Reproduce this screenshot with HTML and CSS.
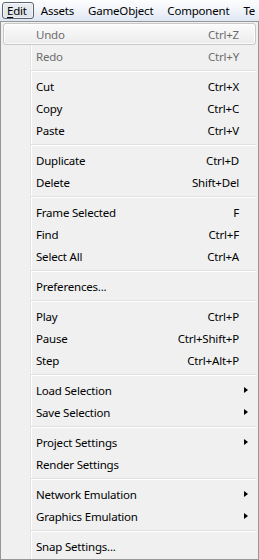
FILE: index.html
```html
<!DOCTYPE html>
<html>
<head>
<meta charset="utf-8">
<link rel="stylesheet" href="styles.css">
</head>
<body>
<div class="menubar">
  <span class="mb-item active"><u>E</u>dit</span>
  <span class="mb-item">Assets</span>
  <span class="mb-item">GameObject</span>
  <span class="mb-item">Component</span>
  <span class="mb-item">Te</span>
</div>
<div class="menu">
  <div class="item disabled hot"><span class="label">Undo</span><span class="key">Ctrl+Z</span></div>
  <div class="item disabled"><span class="label">Redo</span><span class="key">Ctrl+Y</span></div>
  <div class="sep"></div>
  <div class="item"><span class="label">Cut</span><span class="key">Ctrl+X</span></div>
  <div class="item"><span class="label">Copy</span><span class="key">Ctrl+C</span></div>
  <div class="item"><span class="label">Paste</span><span class="key">Ctrl+V</span></div>
  <div class="sep"></div>
  <div class="item"><span class="label">Duplicate</span><span class="key">Ctrl+D</span></div>
  <div class="item"><span class="label">Delete</span><span class="key">Shift+Del</span></div>
  <div class="sep"></div>
  <div class="item"><span class="label">Frame Selected</span><span class="key">F</span></div>
  <div class="item"><span class="label">Find</span><span class="key">Ctrl+F</span></div>
  <div class="item"><span class="label">Select All</span><span class="key">Ctrl+A</span></div>
  <div class="sep"></div>
  <div class="item"><span class="label">Preferences...</span></div>
  <div class="sep"></div>
  <div class="item"><span class="label">Play</span><span class="key">Ctrl+P</span></div>
  <div class="item"><span class="label">Pause</span><span class="key">Ctrl+Shift+P</span></div>
  <div class="item"><span class="label">Step</span><span class="key">Ctrl+Alt+P</span></div>
  <div class="sep"></div>
  <div class="item sub"><span class="label">Load Selection</span><span class="arrow"></span></div>
  <div class="item sub"><span class="label">Save Selection</span><span class="arrow"></span></div>
  <div class="sep"></div>
  <div class="item sub"><span class="label">Project Settings</span><span class="arrow"></span></div>
  <div class="item"><span class="label">Render Settings</span></div>
  <div class="sep"></div>
  <div class="item sub"><span class="label">Network Emulation</span><span class="arrow"></span></div>
  <div class="item sub"><span class="label">Graphics Emulation</span><span class="arrow"></span></div>
  <div class="sep"></div>
  <div class="item"><span class="label">Snap Settings...</span></div>
</div>
</body>
</html>
```
FILE: styles.css
```css
html, body {
  margin: 0;
  padding: 0;
  background: #f0f0f0;
  overflow: hidden;
}
body {
  width: 259px;
  height: 560px;
  font-family: "Noto Sans", "Open Sans", sans-serif;
  font-size: 11.5px;
  letter-spacing: -0.2px;
  color: #000;
}
.menubar {
  height: 21px;
  box-sizing: border-box;
  display: flex;
  align-items: center;
  padding: 0 0 0 2px;
  white-space: nowrap;
  overflow: hidden;
  background: linear-gradient(#fdfdfe 0%, #f3f6fb 40%, #dfe7f3 100%);
}
.mb-item {
  flex: none;
  height: 17px;
  line-height: 16px;
  box-sizing: border-box;
  padding: 0 6px;
  border: 1px solid transparent;
  border-radius: 3px;
}
.mb-item.active {
  padding-left: 4px;
  border-color: #5d6570;
  background: linear-gradient(#e9edf2, #dfe4ea);
  box-shadow: inset 0 0 0 1px rgba(255,255,255,0.5);
}
.mb-item u {
  text-decoration-thickness: 1px;
  text-underline-offset: 2px;
}
.menu {
  box-sizing: border-box;
  width: 259px;
  height: 539px;
  border: 1px solid #979797;
  padding: 1px 2px 2px 2px;
  background:
    linear-gradient(to right, transparent 29px, #e2e3e3 29px, #e2e3e3 30px, #ffffff 30px, #ffffff 31px, transparent 31px),
    #f0f0f0;
}
.item {
  height: 22px;
  box-sizing: border-box;
  display: flex;
  align-items: center;
  padding: 0 16px 0 32px;
  border: 1px solid transparent;
  border-radius: 3px;
  white-space: nowrap;
}
.item.sub {
  padding-right: 7px;
}
.label {
  flex: 1;
}
.key {
  flex: none;
}
.disabled {
  color: #6d6d6d;
}
.hot {
  border-color: #c8c8c8;
  background: linear-gradient(#fbfbfb, #ececec);
  box-shadow: inset 0 0 0 1px rgba(255,255,255,0.7);
}
.arrow {
  width: 0;
  height: 0;
  border-left: 4px solid #000;
  border-top: 3.5px solid transparent;
  border-bottom: 3.5px solid transparent;
}
.sep {
  height: 8px;
  box-sizing: border-box;
  padding-top: 3px;
  margin-left: 28px;
}
.sep::before {
  content: "";
  display: block;
  height: 1px;
  background: #e0e0e0;
  border-bottom: 1px solid #ffffff;
}
```
